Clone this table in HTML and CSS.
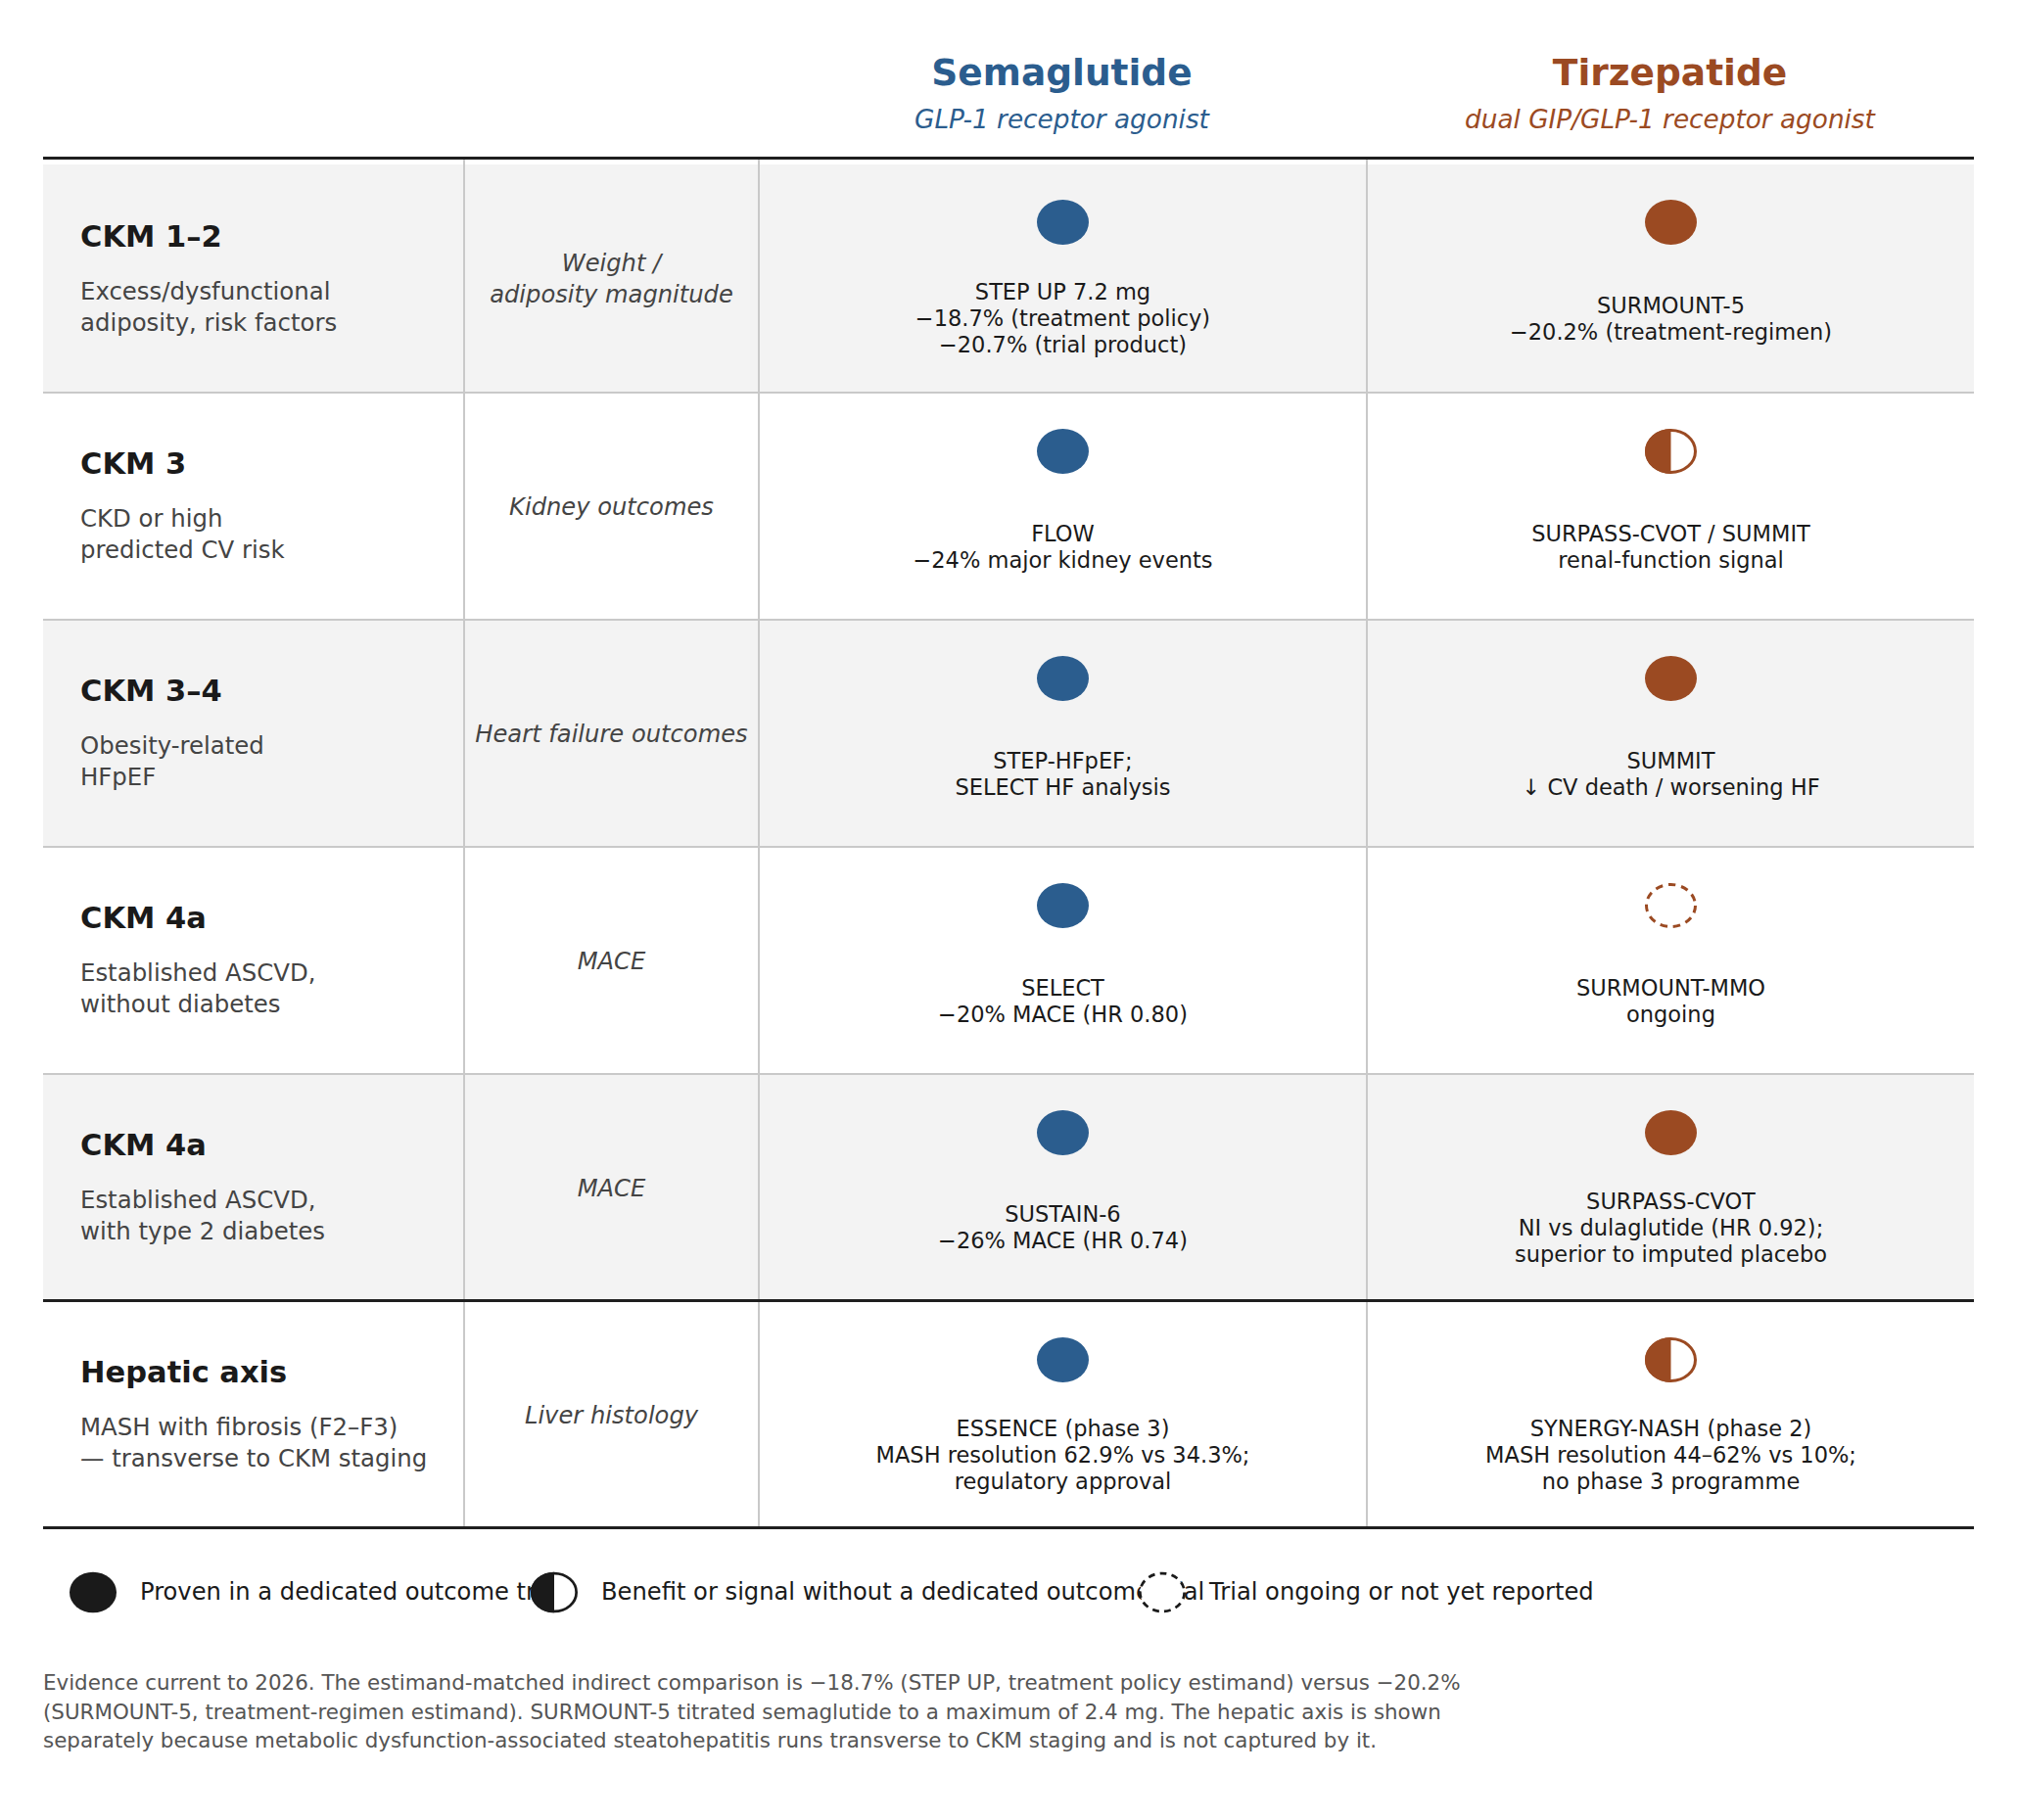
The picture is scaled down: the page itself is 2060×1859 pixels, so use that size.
FILE: index.html
```html
<!DOCTYPE html>
<html lang="en">
<head>
<meta charset="utf-8">
<title>Semaglutide vs Tirzepatide across CKM stages</title>
<link rel="stylesheet" href="styles.css">
</head>
<body>
<div class="page">
  <div class="head">
    <div></div>
    <div></div>
    <div class="drug sema">
      <div class="drug-name">Semaglutide</div>
      <div class="drug-sub">GLP-1 receptor agonist</div>
    </div>
    <div class="drug tirz">
      <div class="drug-name">Tirzepatide</div>
      <div class="drug-sub">dual GIP/GLP-1 receptor agonist</div>
    </div>
  </div>

  <div class="table">
    <div class="row shaded first">
      <div class="cell stage"><div class="stage-title">CKM 1–2</div><div class="stage-desc">Excess/dysfunctional<br>adiposity, risk factors</div></div>
      <div class="cell outcome">Weight /<br>adiposity magnitude</div>
      <div class="cell evid">
        <svg class="mk blue" viewBox="0 0 53 46"><ellipse cx="26.5" cy="23" rx="26.5" ry="23" fill="currentColor"/></svg>
        <div class="evid-text">STEP UP 7.2 mg<br>−18.7% (treatment policy)<br>−20.7% (trial product)</div>
      </div>
      <div class="cell evid">
        <svg class="mk brown" viewBox="0 0 53 46"><ellipse cx="26.5" cy="23" rx="26.5" ry="23" fill="currentColor"/></svg>
        <div class="evid-text">SURMOUNT-5<br>−20.2% (treatment-regimen)</div>
      </div>
    </div>

    <div class="row">
      <div class="cell stage"><div class="stage-title">CKM 3</div><div class="stage-desc">CKD or high<br>predicted CV risk</div></div>
      <div class="cell outcome">Kidney outcomes</div>
      <div class="cell evid">
        <svg class="mk blue" viewBox="0 0 53 46"><ellipse cx="26.5" cy="23" rx="26.5" ry="23" fill="currentColor"/></svg>
        <div class="evid-text">FLOW<br>−24% major kidney events</div>
      </div>
      <div class="cell evid">
        <svg class="mk brown" viewBox="0 0 53 46"><ellipse cx="26.5" cy="23" rx="25" ry="21.5" fill="#fff" stroke="currentColor" stroke-width="3"/><path d="M26.5 0 A26.5 23 0 0 0 26.5 46 Z" fill="currentColor"/></svg>
        <div class="evid-text">SURPASS-CVOT / SUMMIT<br>renal-function signal</div>
      </div>
    </div>

    <div class="row shaded">
      <div class="cell stage"><div class="stage-title">CKM 3–4</div><div class="stage-desc">Obesity-related<br>HFpEF</div></div>
      <div class="cell outcome">Heart failure outcomes</div>
      <div class="cell evid">
        <svg class="mk blue" viewBox="0 0 53 46"><ellipse cx="26.5" cy="23" rx="26.5" ry="23" fill="currentColor"/></svg>
        <div class="evid-text">STEP-HFpEF;<br>SELECT HF analysis</div>
      </div>
      <div class="cell evid">
        <svg class="mk brown" viewBox="0 0 53 46"><ellipse cx="26.5" cy="23" rx="26.5" ry="23" fill="currentColor"/></svg>
        <div class="evid-text">SUMMIT<br>↓ CV death / worsening HF</div>
      </div>
    </div>

    <div class="row">
      <div class="cell stage"><div class="stage-title">CKM 4a</div><div class="stage-desc">Established ASCVD,<br>without diabetes</div></div>
      <div class="cell outcome">MACE</div>
      <div class="cell evid">
        <svg class="mk blue" viewBox="0 0 53 46"><ellipse cx="26.5" cy="23" rx="26.5" ry="23" fill="currentColor"/></svg>
        <div class="evid-text">SELECT<br>−20% MACE (HR 0.80)</div>
      </div>
      <div class="cell evid">
        <svg class="mk brown" viewBox="0 0 53 46"><ellipse cx="26.5" cy="23" rx="25" ry="21.5" fill="none" stroke="currentColor" stroke-width="3" stroke-dasharray="7.5 5.8"/></svg>
        <div class="evid-text">SURMOUNT-MMO<br>ongoing</div>
      </div>
    </div>

    <div class="row shaded split">
      <div class="cell stage"><div class="stage-title">CKM 4a</div><div class="stage-desc">Established ASCVD,<br>with type 2 diabetes</div></div>
      <div class="cell outcome">MACE</div>
      <div class="cell evid">
        <svg class="mk blue" viewBox="0 0 53 46"><ellipse cx="26.5" cy="23" rx="26.5" ry="23" fill="currentColor"/></svg>
        <div class="evid-text">SUSTAIN-6<br>−26% MACE (HR 0.74)</div>
      </div>
      <div class="cell evid">
        <svg class="mk brown" viewBox="0 0 53 46"><ellipse cx="26.5" cy="23" rx="26.5" ry="23" fill="currentColor"/></svg>
        <div class="evid-text">SURPASS-CVOT<br>NI vs dulaglutide (HR 0.92);<br>superior to imputed placebo</div>
      </div>
    </div>

    <div class="row last">
      <div class="cell stage"><div class="stage-title">Hepatic axis</div><div class="stage-desc">MASH with fibrosis (F2–F3)<br>— transverse to CKM staging</div></div>
      <div class="cell outcome">Liver histology</div>
      <div class="cell evid">
        <svg class="mk blue" viewBox="0 0 53 46"><ellipse cx="26.5" cy="23" rx="26.5" ry="23" fill="currentColor"/></svg>
        <div class="evid-text">ESSENCE (phase 3)<br>MASH resolution 62.9% vs 34.3%;<br>regulatory approval</div>
      </div>
      <div class="cell evid">
        <svg class="mk brown" viewBox="0 0 53 46"><ellipse cx="26.5" cy="23" rx="25" ry="21.5" fill="#fff" stroke="currentColor" stroke-width="3"/><path d="M26.5 0 A26.5 23 0 0 0 26.5 46 Z" fill="currentColor"/></svg>
        <div class="evid-text">SYNERGY-NASH (phase 2)<br>MASH resolution 44–62% vs 10%;<br>no phase 3 programme</div>
      </div>
    </div>
  </div>

  <div class="legend">
    <div class="legend-item w1">
      <svg class="lg" viewBox="0 0 53 46"><ellipse cx="26.5" cy="23" rx="26.5" ry="23" fill="currentColor"/></svg>
      <span class="lg-text">Proven in a dedicated outcome trial</span>
    </div>
    <div class="legend-item w2">
      <svg class="lg" viewBox="0 0 53 46"><ellipse cx="26.5" cy="23" rx="25" ry="21.5" fill="#fff" stroke="currentColor" stroke-width="3"/><path d="M26.5 0 A26.5 23 0 0 0 26.5 46 Z" fill="currentColor"/></svg>
      <span class="lg-text">Benefit or signal without a dedicated outcome trial</span>
    </div>
    <div class="legend-item">
      <svg class="lg" viewBox="0 0 53 46"><ellipse cx="26.5" cy="23" rx="25" ry="21.5" fill="#fff" stroke="currentColor" stroke-width="3" stroke-dasharray="7.5 5.8"/></svg>
      <span class="lg-text">Trial ongoing or not yet reported</span>
    </div>
  </div>

  <p class="note">Evidence current to 2026. The estimand-matched indirect comparison is −18.7% (STEP UP, treatment policy estimand) versus −20.2%<br>(SURMOUNT-5, treatment-regimen estimand). SURMOUNT-5 titrated semaglutide to a maximum of 2.4 mg. The hepatic axis is shown<br>separately because metabolic dysfunction-associated steatohepatitis runs transverse to CKM staging and is not captured by it.</p>
</div>
</body>
</html>
```

FILE: styles.css
```css
* { box-sizing: border-box; }

html, body {
  margin: 0;
  padding: 0;
  background: #ffffff;
}

body {
  font-family: "DejaVu Sans", "Noto Sans", sans-serif;
  color: #1a1a1a;
}

.page {
  width: 2060px;
  padding: 0 44px;
}

/* ---------- header ---------- */
.head {
  display: grid;
  grid-template-columns: 429px 301px 621px 621px;
  padding-top: 52px;
  padding-bottom: 22px;
  border-bottom: 3px solid #1f1f1f;
}

.drug {
  text-align: center;
}

.drug-name {
  font-size: 37.5px;
  font-weight: bold;
  line-height: 44px;
}

.drug-sub {
  font-size: 26.3px;
  font-style: italic;
  line-height: 32px;
  margin-top: 10px;
}

.sema { color: #2b5d8e; }
.tirz { color: #9b4a22; }

/* ---------- table ---------- */
.row {
  display: grid;
  grid-template-columns: 429px 301px 621px 621px;
  height: 232px;
  border-bottom: 2px solid #c9c9c9;
}

.row.shaded { background: #f3f3f3; }

.row.first {
  height: 239px;
  background: linear-gradient(to bottom, #ffffff 5px, #f3f3f3 5px);
}

.row.split { border-bottom: 3px solid #1f1f1f; }
.row.last { border-bottom: 3px solid #1f1f1f; }

.cell + .cell { border-left: 2px solid #c9c9c9; }

.stage {
  display: flex;
  flex-direction: column;
  justify-content: center;
  padding-left: 38px;
}

.stage-title {
  font-size: 30.5px;
  font-weight: bold;
  line-height: 36px;
  color: #1a1a1a;
}

.stage-desc {
  font-size: 24.4px;
  line-height: 32px;
  margin-top: 22px;
  color: #444444;
}

.outcome {
  display: flex;
  align-items: center;
  justify-content: center;
  text-align: center;
  font-size: 24.2px;
  font-style: italic;
  line-height: 32px;
  padding-top: 2px;
  color: #444444;
}

.first .stage,
.first .outcome { padding-top: 6px; }

.evid {
  display: flex;
  flex-direction: column;
  align-items: center;
  padding-top: 36px;
}

.first .evid { padding-top: 41px; }

.mk {
  width: 53px;
  height: 46px;
  flex: none;
  display: block;
}

.blue { color: #2b5d8e; }
.brown { color: #9b4a22; }

.evid-text {
  flex: 1;
  display: flex;
  align-items: center;
  justify-content: center;
  text-align: center;
  font-size: 22.5px;
  line-height: 27px;
  padding-top: 1px;
  color: #1a1a1a;
}

/* ---------- legend ---------- */
.legend {
  display: flex;
  align-items: center;
  height: 44px;
  margin-top: 42px;
  padding-left: 27px;
}

.legend-item {
  display: flex;
  align-items: center;
  flex: none;
  white-space: nowrap;
  color: #1a1a1a;
}

.legend-item.w1 { width: 471px; }
.legend-item.w2 { width: 621px; }

.lg {
  width: 48px;
  height: 43px;
  flex: none;
  display: block;
  margin-right: 24px;
  position: relative;
  z-index: 1;
}

.lg-text {
  font-size: 24.2px;
  line-height: 30px;
}

/* ---------- note ---------- */
.note {
  margin: 56px 0 0 0;
  font-size: 21.4px;
  line-height: 29.5px;
  color: #555555;
}
```
